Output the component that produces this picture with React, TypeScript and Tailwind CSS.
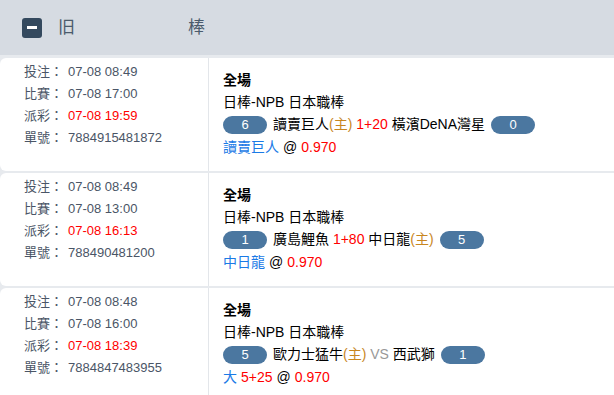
import React from 'react';

type Team = { name: string; home?: boolean };
type Bet = {
  placed: string;
  match: string;
  payout: string;
  ticket: string;
  home: { score: number; team: Team };
  away: { score: number; team: Team };
  line?: string;
  pickLabel: string;
  pickLine?: string;
};

const bets: Bet[] = [
  {
    placed: '07-08 08:49',
    match: '07-08 17:00',
    payout: '07-08 19:59',
    ticket: '7884915481872',
    home: { score: 6, team: { name: '讀賣巨人', home: true } },
    away: { score: 0, team: { name: '橫濱DeNA灣星' } },
    line: '1+20',
    pickLabel: '讀賣巨人',
  },
  {
    placed: '07-08 08:49',
    match: '07-08 13:00',
    payout: '07-08 16:13',
    ticket: '788490481200',
    home: { score: 1, team: { name: '廣島鯉魚' } },
    away: { score: 5, team: { name: '中日龍', home: true } },
    line: '1+80',
    pickLabel: '中日龍',
  },
  {
    placed: '07-08 08:48',
    match: '07-08 16:00',
    payout: '07-08 18:39',
    ticket: '7884847483955',
    home: { score: 5, team: { name: '歐力士猛牛', home: true } },
    away: { score: 1, team: { name: '西武獅' } },
    pickLabel: '大',
    pickLine: '5+25',
  },
];

const font = { fontFamily: '"Liberation Sans", "Noto Sans CJK TC", sans-serif' };

const Score: React.FC<{ n: number }> = ({ n }) => (
  <span className="inline-flex h-[18px] w-[44px] shrink-0 items-center justify-center rounded-full bg-[#4b77a0] text-[13px] text-white">
    {n}
  </span>
);

const TeamName: React.FC<{ team: Team }> = ({ team }) => (
  <span>
    {team.name}
    {team.home && <span className="text-[#c8861f]">(主)</span>}
  </span>
);

const Row: React.FC<{ bet: Bet }> = ({ bet }) => {
  const info = [
    ['投注', bet.placed, false],
    ['比賽', bet.match, false],
    ['派彩', bet.payout, true],
    ['單號', bet.ticket, false],
  ] as const;

  return (
    <div className="flex h-[113px] bg-white rounded-l-[6px]">
      {/* Times + ticket */}
      <div className="w-[209px] shrink-0 border-r border-[#e3e6ea] pt-[3px] pl-[24px] text-[13px] text-[#4a5566]">
        {info.map(([label, value, red]) => (
          <div key={label} className="flex h-[22px] items-center">
            <span className="w-[44px] whitespace-nowrap">{label}：</span>
            <span className={red ? 'text-[#ff0000]' : ''}>{value}</span>
          </div>
        ))}
      </div>

      {/* Market + pick */}
      <div className="flex-1 pt-[11px] pl-[14px] text-[14px] text-black">
        <div className="flex h-[22px] items-center font-bold">全場</div>
        <div className="flex h-[22px] items-center">日棒-NPB 日本職棒</div>
        <div className="flex h-[23px] items-center gap-[6px]">
          <Score n={bet.home.score} />
          <span className="whitespace-nowrap">
            <TeamName team={bet.home.team} />{' '}
            {bet.line ? (
              <span className="text-[#ff0000]">{bet.line}</span>
            ) : (
              <span className="text-[#999999]">VS</span>
            )}{' '}
            <TeamName team={bet.away.team} />
          </span>
          <Score n={bet.away.score} />
        </div>
        <div className="flex h-[23px] items-center">
          <span className="text-[#1a7ae6]">{bet.pickLabel}</span>
          {bet.pickLine && <span className="ml-1 text-[#ff0000]">{bet.pickLine}</span>}
          <span className="mx-1">@</span>
          <span className="text-[#ff0000]">0.970</span>
        </div>
      </div>
    </div>
  );
};

export default function App() {
  return (
    <div className="h-[395px] w-[614px] overflow-hidden bg-[#e7eaee]" style={font}>
      {/* Header */}
      <div className="flex h-[55px] items-center bg-[#d6dbe2] pl-[22px] text-[17px] text-[#4b5b6c]">
        <span className="flex h-[20px] w-[20px] items-center justify-center rounded-[3px] bg-[#34495e]">
          <span className="h-[3px] w-[10px] bg-white" />
        </span>
        <span className="ml-[16px] w-[130px]">旧</span>
        <span>棒</span>
      </div>

      <div className="mt-[3px] flex flex-col gap-[2px]">
        {bets.map((b) => (
          <Row key={b.ticket} bet={b} />
        ))}
      </div>
    </div>
  );
}
